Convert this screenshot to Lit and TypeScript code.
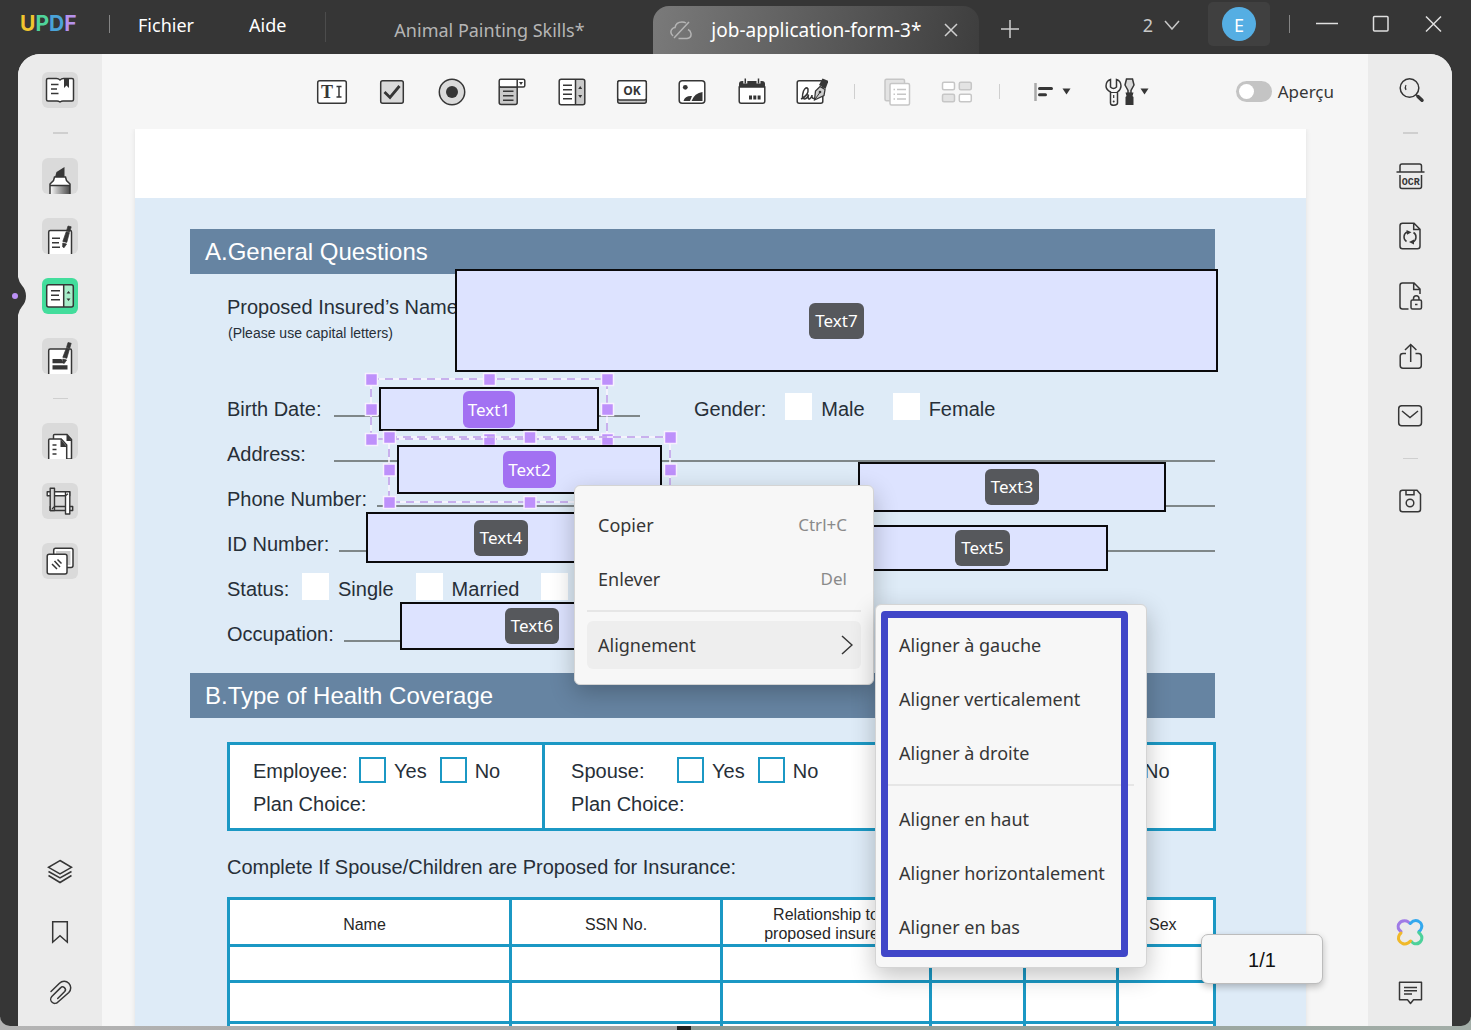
import { LitElement, html, css, svg, nothing } from "lit";
import { customElement, state } from "lit/decorators.js";
import { styleMap } from "lit/directives/style-map.js";
import { classMap } from "lit/directives/class-map.js";

const DARK = "#363636";

/* Rail icons, 36 x 36 */
const railIcons: Record<string, unknown> = {
  reader: svg`<path d="M6 6.500h8.500q2 0 3.500 1.500q1.500-1.500 3.500-1.500H30q1.500 0 1.500 1.500v19.500q0 1.500-1.500 1.500h-9q-1.500 0-3 1q-1.500-1-3-1H6q-1.500 0-1.500-1.500V8q0-1.500 1.500-1.500z" fill="#fff" stroke=${DARK} stroke-width="1.500"/>
    <path d="M9 12.500h7.500M9 17h6M9 21.500h7.500" stroke=${DARK} stroke-width="1.500"/><path d="M22 6h5v10l-2.500-2.500L22 16z" fill=${DARK}/>`,
  highlighter: svg`<defs><linearGradient id="ink"><stop offset="0" stop-color="#fff"/><stop offset=".35" stop-color="#bbb"/><stop offset="1" stop-color="#4a4a4a"/></linearGradient></defs>
    <path d="M13 19l1.500-5 8-5v10z" fill=${DARK}/><path d="M12.500 19h11l1 3.500 3.500 3.500v10H8V26l3.500-3.500z" fill="#fff"/><path d="M8 28h20v8H8z" fill="url(#ink)"/>
    <path d="M8 36V26l3.500-3.500 1-3.500h11l1 3.500L28 26v10M8 27.500h20" fill="none" stroke=${DARK} stroke-width="1.500"/>`,
  edit: svg`<path d="M6.700 36V14q0-1.500 1.500-1.500h20q1.300 0 1.300 1.500v22" fill="#fff" stroke=${DARK} stroke-width="1.500"/>
    <path d="M10 20.200h8M10 24.700h7M10 29.200h8" stroke=${DARK} stroke-width="1.500"/><path d="M26 8l3.200.8-1.500 5-3.200-.8zM24.200 13.800l3.200.8-2.600 9.800-4-1zM20.800 25l3.800 1-2.600 3.800-1.400-1z" fill=${DARK} stroke=${DARK} stroke-width=".7"/>`,
  form: svg`<rect x="4.700" y="6.700" width="26.600" height="22.300" rx="2" fill="#fff"/><path d="M21.700 7h8q1.500 0 1.500 1.500V27q0 2-1.500 2h-8z" fill="#a6edc9"/>
    <rect x="4.700" y="6.700" width="26.600" height="22.300" rx="2" fill="none" stroke=${DARK} stroke-width="1.500"/><path d="M21.700 7v22M9 12.700h9M9 17.200h8M9 21.700h9" stroke=${DARK} stroke-width="1.500"/><path d="M26.500 13l2 2.500h-4zM26.500 23l2-2.500h-4z" fill=${DARK}/>`,
  redact: svg`<path d="M6.700 36V12.500q0-1.500 1.500-1.500h20q1.300 0 1.300 1.500V36" fill="#fff" stroke=${DARK} stroke-width="1.500"/>
    <path d="M10.500 21h9l2 4.300h-11zM10.500 27.200h15v4.300h-15z" fill=${DARK}/><path d="M26 4.500l3.200.8-1.500 5-3.200-.8zM24.200 10.500l3.200.8-2.600 9-4-1zM20.800 21l3.800 1-2.400 3.500-1.600-.8z" fill=${DARK} stroke=${DARK} stroke-width=".7"/>`,
  pages: svg`<path d="M11.500 15.500v-3q0-1 1-1H25l4.500 5V36h-18z" fill="#fff" stroke=${DARK} stroke-width="1.500"/><path d="M24.500 11l5.500 7h-5.500z" fill=${DARK}/>
    <path d="M6.700 36V17q0-1 1-1h11.500l5.500 6v14" fill="#fff" stroke=${DARK} stroke-width="1.500"/><path d="M18.500 16l6.500 8h-6.500z" fill=${DARK}/><path d="M10.500 22h4M10.500 26.500h4M10.500 31h4" stroke=${DARK} stroke-width="1.500"/>`,
  crop: svg`<g fill="#d4d4d4" stroke=${DARK} stroke-width="1.400" stroke-linejoin="round"><path d="M5.200 8.700h22.500v4H5.200z" fill="#fff"/><path d="M8.200 23.500h22.500v4H8.200z"/><path d="M8.200 5.200h4.300v22.300H8.200z"/><path d="M23.500 8.700h4.300v22.300h-4.300z" fill="#fff"/></g><path d="M12.500 23.500l-2.500 2.500M23.500 12.700l2.500-2" stroke=${DARK} stroke-width="1.200"/>`,
  stack: svg`<rect x="11.700" y="5.200" width="19.300" height="19.300" rx="2" fill="#fff" stroke=${DARK} stroke-width="1.500"/><path d="M14 8h14.500v14H14z" fill="#ccc"/>
    <rect x="5.200" y="11.200" width="19.800" height="19.800" rx="2" fill="#fff" stroke=${DARK} stroke-width="1.500"/><path d="M10 21l5 5M12.500 18l5.500 6M15.500 16.500l4 4" stroke=${DARK} stroke-width="1.500"/>`,
  layers: svg`<path d="M18 6.500l11.500 6.800L18 20 6.500 13.300zM6.500 17.500L18 24l11.500-6.500M6.500 21.500L18 28.500l11.500-7" fill="none" stroke=${DARK} stroke-width="1.500"/>`,
  bookmark: svg`<path d="M10.700 7.700h14.600v20.500L18 21.700l-7.300 6.500z" fill="none" stroke=${DARK} stroke-width="1.500"/>`,
  clip: svg`<path d="M9 17.500l8.500-8.300a6.500 6.500 0 0 1 9.300 9.300L16 28a4 4 0 0 1-6.200-5.600l8.700-8.500a2.700 2.700 0 0 1 4.200 3.600l-7 7" fill="none" stroke=${DARK} stroke-width="1.500" stroke-linecap="round"/>`,
  search: svg`<circle cx="17.500" cy="16" r="9.300" fill="none" stroke=${DARK} stroke-width="1.500"/><path d="M14 13q-1.500 2.500 0 5" fill="none" stroke=${DARK} stroke-width="1.200"/><path d="M24 22.500l1.500 1.500" stroke=${DARK} stroke-width="1.500"/><path d="M26 24.500l4 3.700" stroke=${DARK} stroke-width="3.500" stroke-linecap="round"/>`,
  ocr: svg`<path d="M8 13.500V8q0-2 2-2h17.500q2 0 2 2v5.500M4.500 14h28M8 17v11.500q0 2 2 2h17.500q2 0 2-2V17" fill="none" stroke=${DARK} stroke-width="1.500"/><text x="18.700" y="26.500" text-anchor="middle" class="t-ocr" fill=${DARK}>OCR</text>`,
  convert: svg`<path d="M10.500 5.200H22l6 6v17q0 2.500-2.500 2.500h-15q-2.500 0-2.500-2.500V7.700q0-2.500 2.500-2.500zM21.700 5.500v6h6" fill="none" stroke=${DARK} stroke-width="1.500"/><path d="M14.500 23.500a5.500 5.500 0 0 1 .5-9.500M21.500 14.500a5.500 5.500 0 0 1-.5 9.500" fill="none" stroke=${DARK} stroke-width="1.500"/><path d="M14.500 12l5 2.300-4.500 2.500zM22 21.500l-5 2.500 5 2.500z" fill=${DARK}/>`,
  protect: svg`<path d="M16.500 31h-6q-2.500 0-2.500-2.500V7.500Q8 5 10.500 5H22l6 6v5M21.700 5.500v6h6" fill="none" stroke=${DARK} stroke-width="1.500"/><rect x="19" y="22" width="10.500" height="9" rx="1.500" fill="none" stroke=${DARK} stroke-width="1.500"/><path d="M21.500 22v-1.500a2.700 2.700 0 0 1 5.500 0V22M23 26.500h2.500" fill="none" stroke=${DARK} stroke-width="1.500"/>`,
  share: svg`<path d="M14 15.500h-3q-2.800 0-2.800 2.700v9.300q0 2.700 2.800 2.700h15.500q2.800 0 2.800-2.700v-9.300q0-2.700-2.800-2.700h-3M18.700 24V6.500M13 12l5.700-5.500 5.700 5.500" fill="none" stroke=${DARK} stroke-width="1.500"/>`,
  mail: svg`<rect x="6.700" y="7.700" width="22.800" height="20" rx="3" fill="none" stroke=${DARK} stroke-width="1.500"/><path d="M10 13l8 6.500 8-6.500" fill="none" stroke=${DARK} stroke-width="1.500"/>`,
  save: svg`<path d="M10.500 7.200h14.500l3.500 4v15q0 2.500-2.500 2.500H10.500q-2.500 0-2.500-2.500V9.700q0-2.500 2.500-2.500zM14 7.500v4.300h8V7.500" fill="none" stroke=${DARK} stroke-width="1.500"/><circle cx="18" cy="20" r="3.800" fill="none" stroke=${DARK} stroke-width="1.500"/>`,
  ai: svg`<g fill="none" stroke-width="3" stroke-linecap="round"><path d="M9 17.500Q5 14.500 6.500 10.500Q9 6 14.500 7Q16 7.500 17.500 9" stroke="#9f7be6"/><path d="M18.300 9.500Q22 5.500 26 7Q31 9.500 29.500 14Q29 16 27 17.500" stroke="#33a8ee"/><path d="M26.700 18.500Q31 22 29.500 26Q27 31 22 29.500Q20.500 29 19.500 27.500" stroke="#4cd19a"/><path d="M18.500 27Q15 31 10.500 29.500Q5.500 27 6.700 22.500Q7.200 20.500 9 19" stroke="#f0b92a"/></g>`,
  comment: svg`<path d="M7.500 8.200h22v17.600h-8L18.500 29.500l-3-3.700h-8z" fill="none" stroke=${DARK} stroke-width="1.500" stroke-linejoin="round"/><path d="M12 13.500h13M12 16.700h13M12 20h8" stroke=${DARK} stroke-width="1.500"/>`,
};

/* Toolbar icons, 32 x 32 */
const toolIcons: Record<string, unknown> = {
  "Champ de texte": svg`<rect x="1.700" y="4.700" width="28.600" height="22.600" rx="2" fill="#fff" stroke=${DARK} stroke-width="1.500"/><text x="5" y="22" class="t-serif" fill=${DARK}>T</text><path d="M20.500 10.500h5M20.500 21h5M23 10.500V21" stroke=${DARK} stroke-width="1.500"/>`,
  "Case à cocher": svg`<rect x="4.700" y="4.700" width="22.600" height="22.600" rx="2" fill="#dadada" stroke=${DARK} stroke-width="1.500"/><path d="M8.500 16l5.500 5.500L23.500 10" fill="none" stroke=${DARK} stroke-width="2.800"/>`,
  "Bouton radio": svg`<circle cx="16" cy="16" r="12.700" fill="#dadada" stroke=${DARK} stroke-width="1.500"/><circle cx="16" cy="16" r="6" fill=${DARK}/>`,
  "Liste déroulante": svg`<path d="M3.200 11h18v15.500q0 2-2 2h-14q-2 0-2-2z" fill="#c9c9c9" stroke=${DARK} stroke-width="1.500"/><rect x="3.200" y="3.200" width="25.600" height="7.800" rx="1.500" fill="#fff" stroke=${DARK} stroke-width="1.500"/><path d="M21.200 3.500v7.500M7 15.200h10.500M7 19.700h10.500M7 24.200h10.500" stroke=${DARK} stroke-width="1.500"/><path d="M23 6h4l-2 3z" fill=${DARK}/>`,
  "Zone de liste": svg`<rect x="3.200" y="3.200" width="25.600" height="25.600" rx="2" fill="#fff"/><path d="M19.500 3.500h9v25h-9z" fill="#c9c9c9"/><rect x="3.200" y="3.200" width="25.600" height="25.600" rx="2" fill="none" stroke=${DARK} stroke-width="1.500"/><path d="M19.500 3.500v25M7 9.200h9M7 13.700h9M7 18.200h9M7 22.700h9" stroke=${DARK} stroke-width="1.500"/><path d="M24.200 10l2 3h-4zM24.200 22l2-3h-4z" fill=${DARK}/>`,
  Bouton: svg`<rect x="1.700" y="4.700" width="28.600" height="22.600" rx="2" fill="#c9c9c9" stroke=${DARK} stroke-width="1.500"/><rect x="1.700" y="4.700" width="28.600" height="19.300" rx="2" fill="#fff" stroke=${DARK} stroke-width="1.500"/><text x="16" y="19" text-anchor="middle" class="t-ok" fill=${DARK}>OK</text>`,
  Image: svg`<rect x="3.200" y="4.700" width="25.600" height="22.600" rx="3" fill="#fff" stroke=${DARK} stroke-width="1.500"/><circle cx="9.300" cy="11.300" r="2.400" fill=${DARK}/><path d="M7.500 25q1.500-5.500 8.500-5l-2 5zM15.500 25q3-8 11-9v9z" fill=${DARK}/>`,
  Date: svg`<path d="M3 8q0-3 3-3h20q3 0 3 3v3H3z" fill=${DARK}/><path d="M3.200 11h25.600v14q0 2.300-2 2.300H5.200q-2 0-2-2.300z" fill="#fff" stroke=${DARK} stroke-width="1.500"/><path d="M9.300 3v4.500M22.500 3v4.500" stroke="#f7f7f7" stroke-width="4"/><path d="M9.300 2.500v5M22.500 2.500v5" stroke=${DARK} stroke-width="1.500"/><path d="M13 19.500h3v4h-3zM17.300 19.500h3v4h-3zM21.600 19.500h3v4h-3z" fill=${DARK}/>`,
  Signature: svg`<rect x="1.200" y="4.700" width="25.600" height="22.600" rx="2" fill="#fff" stroke=${DARK} stroke-width="1.500"/><path d="M5 23q8-4 7-10q-2-3-4.500 2q-2.500 8 1 8q3-.5 4-4.500q-1 5 1 4.500q2-1 2.500-4q-.5 4.500 3 3" fill="none" stroke=${DARK} stroke-width="1.500"/><path d="M18.500 24l1-9 4.500-4.500 5 3-1 6z" fill="#ccc" stroke=${DARK} stroke-width="1.300"/><path d="M23 9l3.500-6.500 6 2.500-3 8z" fill=${DARK}/><circle cx="24" cy="16" r="1.300" fill=${DARK}/><path d="M18.500 24l5-7" stroke=${DARK} stroke-width="1"/>`,
  Dupliquer: svg`<rect x="4" y="3.200" width="19.500" height="21.500" rx="1.500" fill="#e3e3e3" stroke="#c6c6c6" stroke-width="1.500"/><rect x="9" y="7.500" width="19.500" height="21.500" rx="1.500" fill="#fff" stroke="#c6c6c6" stroke-width="1.500"/><path d="M12.500 13.500h1.500M16 13.500h9M12.500 18.200h1.500M16 18.200h9M12.500 23h1.500M16 23h9" stroke="#c6c6c6" stroke-width="1.500"/>`,
  Disposer: svg`<g stroke="#c6c6c6" stroke-width="1.500"><rect x="1.500" y="6.200" width="12" height="7.500" rx="1.500" fill="#fff"/><rect x="18.300" y="6.200" width="12" height="7.500" rx="1.500" fill="#e3e3e3"/><rect x="1.500" y="18.200" width="12" height="7.500" rx="1.500" fill="#e3e3e3"/><rect x="18.300" y="18.200" width="12" height="7.500" rx="1.500" fill="#fff"/></g>`,
};

interface Field {
  name: string;
  x: number;
  y: number;
  w: number;
  h: number;
  selected?: boolean;
}

/* Field rectangles on the page canvas, measured from its top left corner */
const FIELDS: Field[] = [
  { name: "Text7", x: 320, y: 140, w: 763, h: 103 },
  { name: "Text3", x: 723, y: 333, w: 308, h: 50 },
  { name: "Text4", x: 231, y: 383, w: 270, h: 51 },
  { name: "Text5", x: 722, y: 396, w: 251, h: 46 },
  { name: "Text6", x: 265, y: 473, w: 264, h: 48 },
  { name: "Text1", x: 244, y: 258, w: 220, h: 44, selected: true },
  { name: "Text2", x: 262, y: 316, w: 265, h: 49, selected: true },
];

@customElement("app-root")
export class AppRoot extends LitElement {
  @state() private preview = false;

  static styles = css`
    :host {
      display: block;
      height: 100vh;
      overflow: hidden;
      background: linear-gradient(90deg, #b4b4b4, #a3a3a3 46%, #222 46%, #222 47%, #8c9891 47%, #a3aea8);
      font-family: "Noto Sans", "Open Sans", sans-serif;
      font-size: 18px;
      line-height: 24px;
      color: #363636;
    }
    *, *::before, *::after { box-sizing: border-box; }
    button { font: inherit; color: inherit; background: none; border: 0; padding: 0; margin: 0; }
    svg { display: block; flex: none; }

    .window {
      height: calc(100% - 4px);
      display: flex;
      flex-direction: column;
      background: #363636;
      border-radius: 0 0 10px 10px;
      overflow: hidden;
    }
    .titlebar { height: 54px; flex: none; display: flex; align-items: flex-start; color: #fff; padding: 0 29px 0 20px; }
    .titlebar > * { flex: none; }
    .logo { font: 700 21px/48px Inter, sans-serif; width: 89px; }
    .logo .u { color: #f0c52e; }
    .logo .p { color: #4fd39b; }
    .logo .d { color: #4aa3d8; }
    .logo .f { color: #b692ec; }
    .vline { width: 1px; height: 18px; margin-top: 15px; background: #858585; }
    .vline.tall { height: 30px; margin-top: 12px; background: #4c4c4c; }
    .vline.end { margin-left: 19px; }
    .menubar { display: flex; gap: 55px; padding: 0 39px 0 28px; line-height: 50px; }
    .tabs { display: flex; align-items: flex-start; padding-left: 68px; }
    .tab { color: #b5b5b5; line-height: 60px; width: 259px; text-align: left; }
    .tab-active {
      margin-top: 6px; height: 48px; width: 326px; border-radius: 16px 16px 0 0;
      background: linear-gradient(100deg, #7a7a7a, #5c5c5c 50%, #3e3e3e);
      display: flex; align-items: center; padding: 0 20px 0 16px; color: #fff;
    }
    .tab-active .name { flex: 1; padding-left: 18px; white-space: nowrap; font-size: 19px; }
    .new-tab { margin: 20px 0 0 22px; }
    .spacer { flex: 1 1 0; }
    .count { display: flex; align-items: center; gap: 11px; color: #c8c8c8; height: 50px; margin-right: 28px; }
    .account { width: 62px; height: 44px; margin-top: 2px; border-radius: 5px; background: #404040; display: grid; place-items: center; }
    .avatar { width: 34px; height: 34px; border-radius: 50%; background: #55aee3; line-height: 36px; color: #fff; text-align: center; }
    .win-controls { display: flex; align-items: center; gap: 34px; height: 48px; margin-left: 26px; }

    .body {
      flex: 1; min-height: 0; margin: 0 19px 0 18px; display: flex;
      background: #f6f6f6; border-radius: 22px 22px 0 0; overflow: hidden;
    }
    .body-wrap { flex: 1; min-height: 0; display: flex; flex-direction: column; position: relative; }
    .notch { position: absolute; left: 10px; top: 220px; }
    .rail {
      width: 84px; flex: none; background: #ebebeb; display: flex; flex-direction: column;
      align-items: center; gap: 24px; padding: 18px 0 16px;
    }
    .rail button { width: 36px; height: 36px; border-radius: 6px; overflow: hidden; flex: none; }
    .rail button.tile { background: #dadada; }
    .rail button.active { background: #43dd9c; }
    .dash { width: 15px; height: 2px; background: #cfcfcf; border: 0; margin: 0; flex: none; }
    .dash.thin { height: 1px; }
    .grow { margin-top: auto; }
    .t-ocr { font: 700 10px "Liberation Mono", monospace; }
    .t-ok { font: 700 12px "Open Sans", sans-serif; }
    .t-serif { font: 700 18px "Liberation Serif", serif; }

    .main { flex: 1; min-width: 0; display: flex; flex-direction: column; position: relative; }
    .toolbar { height: 75px; flex: none; display: flex; align-items: center; padding: 0 34px 0 200px; }
    .toolbar button { width: 60px; height: 40px; display: flex; align-items: center; justify-content: center; }
    .toolbar .pick { width: 80px; }
    .toolbar .pick.tools { width: 68px; }
    .split { width: 1px; height: 15px; margin: 0 12px; background: #cfcfcf; }
    .preview { margin-left: auto; display: flex; align-items: center; gap: 6px; font-size: 17px; }
    .switch {
      appearance: none; margin: 0; width: 36px; height: 21px; border-radius: 11px; background: #c4c4c4;
      padding: 3px; display: flex;
    }
    .switch::before { content: ""; width: 15px; height: 15px; border-radius: 50%; background: #fff; }
    .switch:checked { background: #43dd9c; justify-content: flex-end; }

    .viewport { flex: 1; min-height: 0; overflow: hidden; padding: 0 62px 0 33px; }
    .page {
      position: relative; background: #deebf7; border-top: 69px solid #fff; box-shadow: 0 0 5px #00000018;
      padding: 31px 90px 0 55px; font-family: "Liberation Sans", Arial, sans-serif; font-size: 20px; color: #272f38;
    }
    .band { margin-right: 1px; height: 45px; line-height: 45px; padding-left: 15px; background: #6684a2; color: #fff; font-size: 24px; }
    .questions { padding-left: 37px; padding-right: 1px; margin-bottom: 17px; }
    .insured { height: 112px; padding-top: 21px; }
    .insured p { margin: 0; line-height: 24px; }
    .insured .hint { font-size: 14px; line-height: 28px; padding-left: 1px; }
    .row { height: 45px; display: flex; align-items: center; gap: 10px; }
    .row .key { min-width: 97px; }
    .row .key.snug { min-width: 65px; }
    .rule { flex: 1; height: 2px; margin-top: 14px; background: #7f8789; }
    .rule.short { flex: 0 0 306px; }
    .opt { display: flex; align-items: center; gap: 9px; }
    .gender { display: flex; padding-left: 44px; gap: 28px; align-items: center; }
    .gender .title { margin-right: -9px; }
    .row .status { display: flex; gap: 22px; }
    .box { appearance: none; margin: 0 0 4px; width: 27px; height: 27px; background: #fff; }
    .box.line { border: 2px solid #1b98c4; height: 26px; margin: 0 0 3px; }
    .plans { margin: 24px 0 0 37px; display: grid; grid-template-columns: 314fr 354fr 321fr; background: #fff; border: 3px solid #1b98c4; height: 89px; }
    .plan { padding: 10px 0 0 23px; }
    .plan + .plan { border-left: 3px solid #1b98c4; padding-left: 26px; }
    .plan p { margin: 0; line-height: 33px; height: 33px; display: flex; align-items: center; }
    .plan .who { width: 106px; }
    .plan .opt { gap: 8px; margin-right: 13px; }
    .plan .opt.wide { padding-left: 186px; }
    .lead { margin: 0; padding: 24px 0 17px 37px; line-height: 25px; }
    .people { width: calc(100% - 37px); margin-left: 37px; border-collapse: collapse; table-layout: fixed; background: #fff; font-size: 16px; line-height: 19px; }
    .people th, .people td { border: 3px solid #1b98c4; padding: 0; height: 41px; }
    .people th { height: 47px; padding-top: 4px; font-weight: 400; color: #272727; }
    .people tr.tight td { height: 36px; }
    .c1 { width: 282px; } .c2 { width: 211px; } .c3 { width: 209px; } .c4 { width: 94px; } .c6 { width: 97px; }
    .people th:first-child { padding-right: 10px; }
    .people th.sex { text-align: left; padding-left: 30px; }

    .canvas { position: absolute; inset: -69px 0 auto 0; height: 0; font-family: "Noto Sans", sans-serif; }
    .field { position: absolute; background: #dde3ff; border: 2px solid #0a0a0c; display: grid; place-items: center; }
    .tag { background: #56585c; color: #fff; font-size: 17px; line-height: 36px; border-radius: 6px; padding: 0 6px; }
    .tag.sel { background: #a271f2; line-height: 37px; padding: 0 5px; }
    .frame { position: absolute; overflow: visible; pointer-events: none; }

    .menu {
      position: absolute; display: flex; flex-direction: column; gap: 6px; background: #f7f7f7;
      border: 1px solid #d4d4d4; border-radius: 6px; box-shadow: 0 8px 24px #0000003d; padding: 15px 12px;
    }
    .menu button { height: 48px; display: flex; align-items: center; justify-content: space-between; border-radius: 6px; padding: 0 12px 0 11px; white-space: nowrap; }
    .menu button.on { background: #eeeeee; padding-right: 8px; }
    .menu .key { color: #8a8a8a; font-size: 17px; padding-right: 2px; }
    .menu hr { width: 100%; height: 6px; margin: 0; border: 0; background: linear-gradient(#e6e6e6, #e6e6e6) 0 1px / 100% 2px no-repeat; }
    .context { left: 472px; top: 431px; width: 300px; }
    .sub { left: 773px; top: 550px; width: 272px; padding: 16px 12px; }
    .sub::after { content: ""; position: absolute; left: 5px; top: 6px; width: 247px; height: 346px; border: 7px solid #4046c8; border-radius: 4px; pointer-events: none; }

    .pager {
      position: absolute; right: 45px; bottom: 42px; width: 122px; height: 50px; background: #f7f7f7;
      border: 1px solid #bcbcbc; border-radius: 7px; box-shadow: 0 3px 7px #0000003d;
      font: 20px/50px "Liberation Sans", Arial, sans-serif; color: #111; text-align: center;
    }
  `;

  private rail(name: string, label: string, cls = "") {
    return html`<button class=${cls} aria-label=${label}><svg width="36" height="36" viewBox="0 0 36 36">${railIcons[name]}</svg></button>`;
  }

  private tool(name: string) {
    return html`<button aria-label=${name}><svg width="32" height="32" viewBox="0 0 32 32">${toolIcons[name]}</svg></button>`;
  }

  private field(f: Field) {
    const pos = { left: `${f.x}px`, top: `${f.y}px`, width: `${f.w}px`, height: `${f.h}px` };
    return html`
      <button class="field" style=${styleMap(pos)}>
        <span class=${classMap({ tag: true, sel: !!f.selected })}>${f.name}</span>
      </button>
      ${f.selected ? this.selection(f) : nothing}
    `;
  }

  private selection(f: Field) {
    const w = f.w + 16;
    const h = f.h + 16;
    const points = [0, w / 2, w].flatMap((x) => [0, h / 2, h].map((y) => [x, y])).filter(([x, y]) => x !== w / 2 || y !== h / 2);
    const pos = { left: `${f.x - 8}px`, top: `${f.y - 8}px` };
    return html`<svg class="frame" style=${styleMap(pos)} width=${w} height=${h}>
      <rect width=${w} height=${h} fill="none" stroke="#fbf6ff" stroke-width="1.500"/>
      <rect width=${w} height=${h} fill="none" stroke="#b99be8" stroke-width="1.500" stroke-dasharray="8 6"/>
      ${points.map(([x, y]) => svg`<rect x=${x - 5.5} y=${y - 5.5} width="12" height="12" fill="#be90fb" stroke="#f7f0ff" stroke-width="1.500"/>`)}
    </svg>`;
  }

  private option(label: string, line = false, extra = "") {
    return html`<label class="opt ${extra}"><input type="checkbox" class="box ${line ? "line" : ""}" />${label}</label>`;
  }

  private caret() {
    return html`<svg width="9" height="7" viewBox="0 0 9 7"><path d="M.5.5h8L4.500 6.500z" fill=${DARK} /></svg>`;
  }

  private titlebar() {
    return html`<header class="titlebar">
      <div class="logo"><span class="u">U</span><span class="p">P</span><span class="d">D</span><span class="f">F</span></div>
      <span class="vline"></span>
      <nav class="menubar"><button>Fichier</button><button>Aide</button></nav>
      <span class="vline tall"></span>
      <div class="tabs">
        <button class="tab">Animal Painting Skills*</button>
        <div class="tab-active">
          <svg width="24" height="22" viewBox="0 0 24 22" fill="none" stroke="#b4b4b4" stroke-width="1.500"><path d="M4 17Q0 13 3.500 9.500Q5 8.500 6 8.500Q7 3 13 3Q15.500 3 17 4M5 19L20 3M9.500 19.500h8.500Q22.500 19 22 14.500Q21.500 11.500 19 10.500" /></svg>
          <span class="name">job-application-form-3*</span>
          <button aria-label="Fermer l'onglet"><svg width="16" height="16" viewBox="0 0 16 16"><path d="M2 2l12 12M14 2L2 14" stroke="#d0d0d0" stroke-width="1.500" /></svg></button>
        </div>
        <button class="new-tab" aria-label="Nouvel onglet"><svg width="18" height="18" viewBox="0 0 18 18"><path d="M0 9h18M9 0v18" stroke="#d0d0d0" stroke-width="1.500" /></svg></button>
      </div>
      <span class="spacer"></span>
      <button class="count">2<svg width="16" height="10" viewBox="0 0 16 10"><path d="M1 1l7 8 7-8" fill="none" stroke="#c8c8c8" stroke-width="1.500" /></svg></button>
      <button class="account"><span class="avatar">E</span></button>
      <span class="vline end"></span>
      <div class="win-controls">
        <button aria-label="Réduire"><svg width="22" height="18" viewBox="0 0 22 18"><path d="M0 8.500h22" stroke="#e0e0e0" stroke-width="1.500" /></svg></button>
        <button aria-label="Agrandir"><svg width="18" height="18" viewBox="0 0 18 18"><rect x="1.500" y="1.500" width="14.500" height="14.500" rx="1" fill="none" stroke="#e0e0e0" stroke-width="1.500" /></svg></button>
        <button aria-label="Fermer"><svg width="18" height="18" viewBox="0 0 18 18"><path d="M2 1.500l15 15M17 1.500l-15 15" stroke="#e0e0e0" stroke-width="1.500" /></svg></button>
      </div>
    </header>`;
  }

  private toolbar() {
    const tools = Object.keys(toolIcons);
    return html`<div class="toolbar">
      ${tools.slice(0, 9).map((t) => this.tool(t))}
      <span class="split"></span>
      ${tools.slice(9).map((t) => this.tool(t))}
      <span class="split"></span>
      <button class="pick" aria-label="Aligner">
        <svg width="29" height="32" viewBox="0 0 29 32"><path d="M2.500 7v18" stroke="#a9a9a9" stroke-width="2.500" /><path d="M6.500 12.500h12M6.500 18.700h6" stroke=${DARK} stroke-width="3" stroke-linecap="round" /></svg>
        ${this.caret()}
      </button>
      <button class="pick tools" aria-label="Outils">
        <svg width="36" height="32" viewBox="0 0 36 32"><path d="M6.500 3.500v7.500q3 3 6 0V3.500q4.500 1.500 4.500 6.500 0 3.500-3.500 6v11q0 2-3.500 2.200T6.500 27V16Q2 13.500 2 10q0-5 4.500-6.500z" fill="#f7f7f7" stroke=${DARK} stroke-width="1.500" /><path d="M6.500 16.500h6.500M9.700 19v3" stroke=${DARK} stroke-width="1.200" /><circle cx="9.700" cy="25.500" r="1" fill=${DARK} /><path d="M22.500 3h6l1.500 6-3 5.500v3h-3v-3L21 9z" fill="#d8d8d8" stroke=${DARK} stroke-width="1.500" /><path d="M21.500 16.500h8l-1 3.500 1 1v8h-8v-8l1-1z" fill=${DARK} /></svg>
        ${this.caret()}
      </button>
      <label class="preview"><input type="checkbox" role="switch" class="switch" .checked=${this.preview} @change=${() => (this.preview = !this.preview)} />Aperçu</label>
    </div>`;
  }

  private document() {
    const blank = (n: number) => Array.from({ length: n }, () => html`<td></td>`);
    return html`<article class="page">
      <div class="band">A.General Questions</div>
      <div class="questions">
        <div class="insured"><p>Proposed Insured’s Name</p><p class="hint">(Please use capital letters)</p></div>
        <div class="row">
          <span class="key">Birth Date:</span><span class="rule short"></span>
          <div class="gender"><span class="title">Gender:</span>${this.option("Male")}${this.option("Female")}</div>
        </div>
        <div class="row"><span class="key">Address:</span><span class="rule"></span></div>
        <div class="row"><span class="key">Phone Number:</span><span class="rule"></span></div>
        <div class="row"><span class="key">ID Number:</span><span class="rule"></span></div>
        <div class="row"><span class="key snug">Status:</span><div class="status">${this.option("Single")}${this.option("Married")}<input type="checkbox" class="box" aria-label="Status" /></div></div>
        <div class="row"><span class="key">Occupation:</span><span class="rule short"></span></div>
      </div>
      <div class="band">B.Type of Health Coverage</div>
      <div class="plans">
        ${["Employee:", "Spouse:"].map((who) => html`<div class="plan"><p><span class="who">${who}</span>${this.option("Yes", true)}${this.option("No", true)}</p><p>Plan Choice:</p></div>`)}
        <div class="plan"><p>${this.option("No", true, "wide")}</p></div>
      </div>
      <p class="lead">Complete If Spouse/Children are Proposed for Insurance:</p>
      <table class="people">
        <colgroup><col class="c1" /><col class="c2" /><col class="c3" /><col class="c4" /><col /><col class="c6" /></colgroup>
        <thead><tr><th>Name</th><th>SSN No.</th><th>Relationship to<br />proposed insured</th><th></th><th></th><th class="sex">Sex</th></tr></thead>
        <tbody><tr class="tight">${blank(6)}</tr><tr>${blank(6)}</tr><tr>${blank(6)}</tr></tbody>
      </table>
      <div class="canvas">${FIELDS.map((f) => this.field(f))}</div>
    </article>`;
  }

  render() {
    return html`<div class="window">
      ${this.titlebar()}
      <div class="body-wrap">
        <div class="body">
          <nav class="rail">
            ${this.rail("reader", "Lecteur", "tile")}
            <hr class="dash" />
            ${this.rail("highlighter", "Commenter", "tile")}${this.rail("edit", "Modifier", "tile")}${this.rail("form", "Formulaire", "active")}${this.rail("redact", "Masquer", "tile")}
            <hr class="dash thin" />
            ${this.rail("pages", "Pages", "tile")}${this.rail("crop", "Recadrer", "tile")}${this.rail("stack", "Filigrane", "tile")}
            ${this.rail("layers", "Calques", "grow")}${this.rail("bookmark", "Signets")}${this.rail("clip", "Pièces jointes")}
          </nav>
          <main class="main">
            ${this.toolbar()}
            <div class="viewport">${this.document()}</div>
            <div class="menu context" role="menu">
              <button role="menuitem">Copier<span class="key">Ctrl+C</span></button>
              <button role="menuitem">Enlever<span class="key">Del</span></button>
              <hr />
              <button role="menuitem" class="on">Alignement<svg width="12" height="20" viewBox="0 0 12 20"><path d="M1 1l10 9-10 9" fill="none" stroke=${DARK} stroke-width="1.500" /></svg></button>
            </div>
            <div class="menu sub" role="menu">
              ${["Aligner à gauche", "Aligner verticalement", "Aligner à droite"].map((t) => html`<button role="menuitem">${t}</button>`)}
              <hr />
              ${["Aligner en haut", "Aligner horizontalement", "Aligner en bas"].map((t) => html`<button role="menuitem">${t}</button>`)}
            </div>
            <div class="pager">1/1</div>
          </main>
          <nav class="rail">
            ${this.rail("search", "Rechercher")}
            <hr class="dash" />
            ${this.rail("ocr", "Reconnaissance")}${this.rail("convert", "Convertir")}${this.rail("protect", "Protéger")}${this.rail("share", "Partager")}${this.rail("mail", "Envoyer")}
            <hr class="dash thin" />
            ${this.rail("save", "Enregistrer")}
            ${this.rail("ai", "Assistant", "grow")}${this.rail("comment", "Commentaires")}
          </nav>
        </div>
        <svg class="notch" width="18" height="44" viewBox="0 0 18 44"><path d="M8 3q1 5 4 8.500Q16 16 16 22t-4 10.500Q9 36 8 41z" fill=${DARK} /><circle cx="5" cy="22" r="3" fill="#bb90f5" /></svg>
      </div>
    </div>`;
  }
}
